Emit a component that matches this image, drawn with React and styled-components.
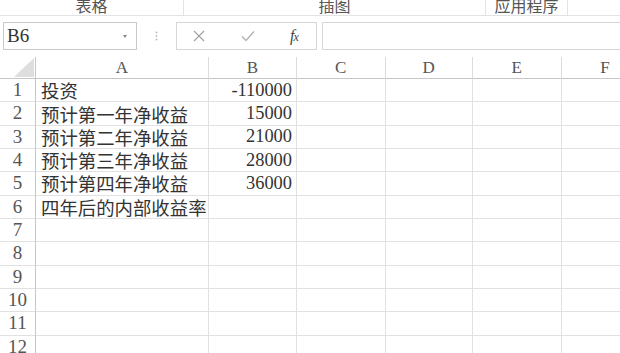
import React from 'react';
import styled, { createGlobalStyle } from 'styled-components';

const serifStack = `"Liberation Serif", "Noto Sans CJK SC", serif`;

const GlobalStyle = createGlobalStyle`
  html, body {
    margin: 0;
    padding: 0;
    background: #fff;
    overflow: hidden;
  }
  body {
    font-family: ${serifStack};
  }
`;

const Page = styled.div`
  width: 620px;
  height: 353px;
  overflow: hidden;
  background: #fff;
`;

const Ribbon = styled.div`
  display: flex;
  height: 15px;
  border-bottom: 1px solid #e3e3e3;
  overflow: hidden;
`;

const RibbonGroup = styled.div`
  flex: ${p => (p.$width ? `0 0 ${p.$width}px` : '1')};
  display: flex;
  justify-content: center;
  border-right: ${p => (p.$last ? 'none' : '1px solid #e3e3e3')};
  box-sizing: border-box;
  overflow: hidden;
`;

const RibbonLabel = styled.span`
  font-family: "Noto Sans CJK SC", sans-serif;
  font-size: 16px;
  line-height: 16px;
  margin-top: -3px;
  color: #555;
  white-space: nowrap;
`;

const FormulaBar = styled.div`
  display: flex;
  align-items: flex-start;
  height: 41px;
  padding: 6px 0 0 3px;
  box-sizing: border-box;
`;

const NameBox = styled.div`
  flex: 0 0 134px;
  height: 28px;
  box-sizing: border-box;
  border: 1px solid #c9c9c9;
  display: flex;
  align-items: center;
  justify-content: space-between;
  padding: 0 9px 0 3px;
  font-family: ${serifStack};
  font-size: 19px;
  color: #333;
`;

const Caret = styled.span`
  width: 0;
  height: 0;
  border-left: 2px solid transparent;
  border-right: 2px solid transparent;
  border-top: 3px solid #888;
`;

const Grip = styled.div`
  flex: 0 0 39px;
  height: 28px;
  display: flex;
  align-items: center;
  justify-content: center;
`;

const ButtonBox = styled.div`
  flex: 0 0 141px;
  height: 28px;
  box-sizing: border-box;
  border: 1px solid #d6d6d6;
  display: flex;
  align-items: center;
`;

const BarButton = styled.div`
  flex: 0 0 ${p => p.$w}px;
  display: flex;
  align-items: center;
  justify-content: center;
`;

const Fx = styled.span`
  font-family: "Liberation Serif", serif;
  font-style: italic;
  font-size: 16px;
  color: #444;
  letter-spacing: -1px;

  small {
    font-size: 12px;
  }
`;

const FormulaInput = styled.div`
  flex: 1;
  margin-left: 5px;
  height: 28px;
  box-sizing: border-box;
  border: 1px solid #d6d6d6;
  border-right: none;
`;

const Sheet = styled.div`
  display: grid;
  grid-template-columns: 36px 173px 88px 88.5px 87.5px 88.5px 88px 1fr;
  grid-template-rows: 22px;
  grid-auto-rows: 23.33px;
`;

const Corner = styled.div`
  box-sizing: border-box;
  border-right: 1px solid #c6c6c6;
  border-bottom: 1px solid #c6c6c6;
  display: flex;
  align-items: flex-end;
  justify-content: flex-end;
  padding: 0 1px 1px 0;

  &::before {
    content: '';
    width: 20px;
    height: 19px;
    background: #dedede;
    clip-path: polygon(100% 0, 100% 100%, 0 100%);
  }
`;

const ColHead = styled.div`
  box-sizing: border-box;
  border-right: 1px solid #dcdcdc;
  border-bottom: 1px solid #c6c6c6;
  display: flex;
  align-items: center;
  justify-content: center;
  font-family: ${serifStack};
  font-size: 17px;
  color: #555;
`;

const RowHead = styled.div`
  box-sizing: border-box;
  border-right: 1px solid #c6c6c6;
  border-bottom: 1px solid #e1e1e1;
  display: flex;
  align-items: center;
  justify-content: center;
  font-family: ${serifStack};
  font-size: 19px;
  color: #555;
`;

const Cell = styled.div`
  box-sizing: border-box;
  border-right: 1px solid #e1e1e1;
  border-bottom: 1px solid #e1e1e1;
  display: flex;
  align-items: center;
  justify-content: ${p => (p.$num ? 'flex-end' : 'flex-start')};
  padding: ${p => (p.$num ? '0 4px 0 0' : '0 0 0 5px')};
  font-family: ${serifStack};
  font-size: 18.4px;
  color: #333;
  white-space: nowrap;
  overflow: visible;
  position: relative;
  z-index: 1;
`;

const columns = ['A', 'B', 'C', 'D', 'E', 'F', 'G'];

const data = [
  ['投资', '-110000'],
  ['预计第一年净收益', '15000'],
  ['预计第二年净收益', '21000'],
  ['预计第三年净收益', '28000'],
  ['预计第四年净收益', '36000'],
  ['四年后的内部收益率', ''],
];

const CloseIcon = () => (
  <svg width="12" height="12" viewBox="0 0 12 12">
    <path d="M1 1 L11 11 M11 1 L1 11" stroke="#a0a0a0" strokeWidth="1.1" fill="none" />
  </svg>
);

const CheckIcon = () => (
  <svg width="14" height="12" viewBox="0 0 14 12">
    <path d="M1 6.5 L5 10.5 L13 1.5" stroke="#b4b4b4" strokeWidth="1.4" fill="none" />
  </svg>
);

const GripIcon = () => (
  <svg width="3" height="10" viewBox="0 0 3 10">
    <circle cx="1.5" cy="1.5" r="0.9" fill="#bbb" />
    <circle cx="1.5" cy="5" r="0.9" fill="#bbb" />
    <circle cx="1.5" cy="8.5" r="0.9" fill="#bbb" />
  </svg>
);

export default function App() {
  const rows = Array.from({ length: 12 }, (_, i) => data[i] || ['', '']);

  return (
    <Page>
      <GlobalStyle />
      <Ribbon>
        <RibbonGroup $width={184}>
          <RibbonLabel>表格</RibbonLabel>
        </RibbonGroup>
        <RibbonGroup $width={302}>
          <RibbonLabel>插图</RibbonLabel>
        </RibbonGroup>
        <RibbonGroup $width={82}>
          <RibbonLabel>应用程序</RibbonLabel>
        </RibbonGroup>
        <RibbonGroup $last />
      </Ribbon>

      <FormulaBar>
        <NameBox>
          <span>B6</span>
          <Caret />
        </NameBox>
        <Grip>
          <GripIcon />
        </Grip>
        <ButtonBox>
          <BarButton $w={44}>
            <CloseIcon />
          </BarButton>
          <BarButton $w={54}>
            <CheckIcon />
          </BarButton>
          <BarButton $w={38}>
            <Fx>
              f<small>x</small>
            </Fx>
          </BarButton>
        </ButtonBox>
        <FormulaInput />
      </FormulaBar>

      <Sheet>
        <Corner />
        {columns.map(c => (
          <ColHead key={c}>{c}</ColHead>
        ))}
        {rows.map((r, i) => (
          <React.Fragment key={i}>
            <RowHead>{i + 1}</RowHead>
            <Cell>{r[0]}</Cell>
            <Cell $num>{r[1]}</Cell>
            <Cell />
            <Cell />
            <Cell />
            <Cell />
            <Cell />
          </React.Fragment>
        ))}
      </Sheet>
    </Page>
  );
}
